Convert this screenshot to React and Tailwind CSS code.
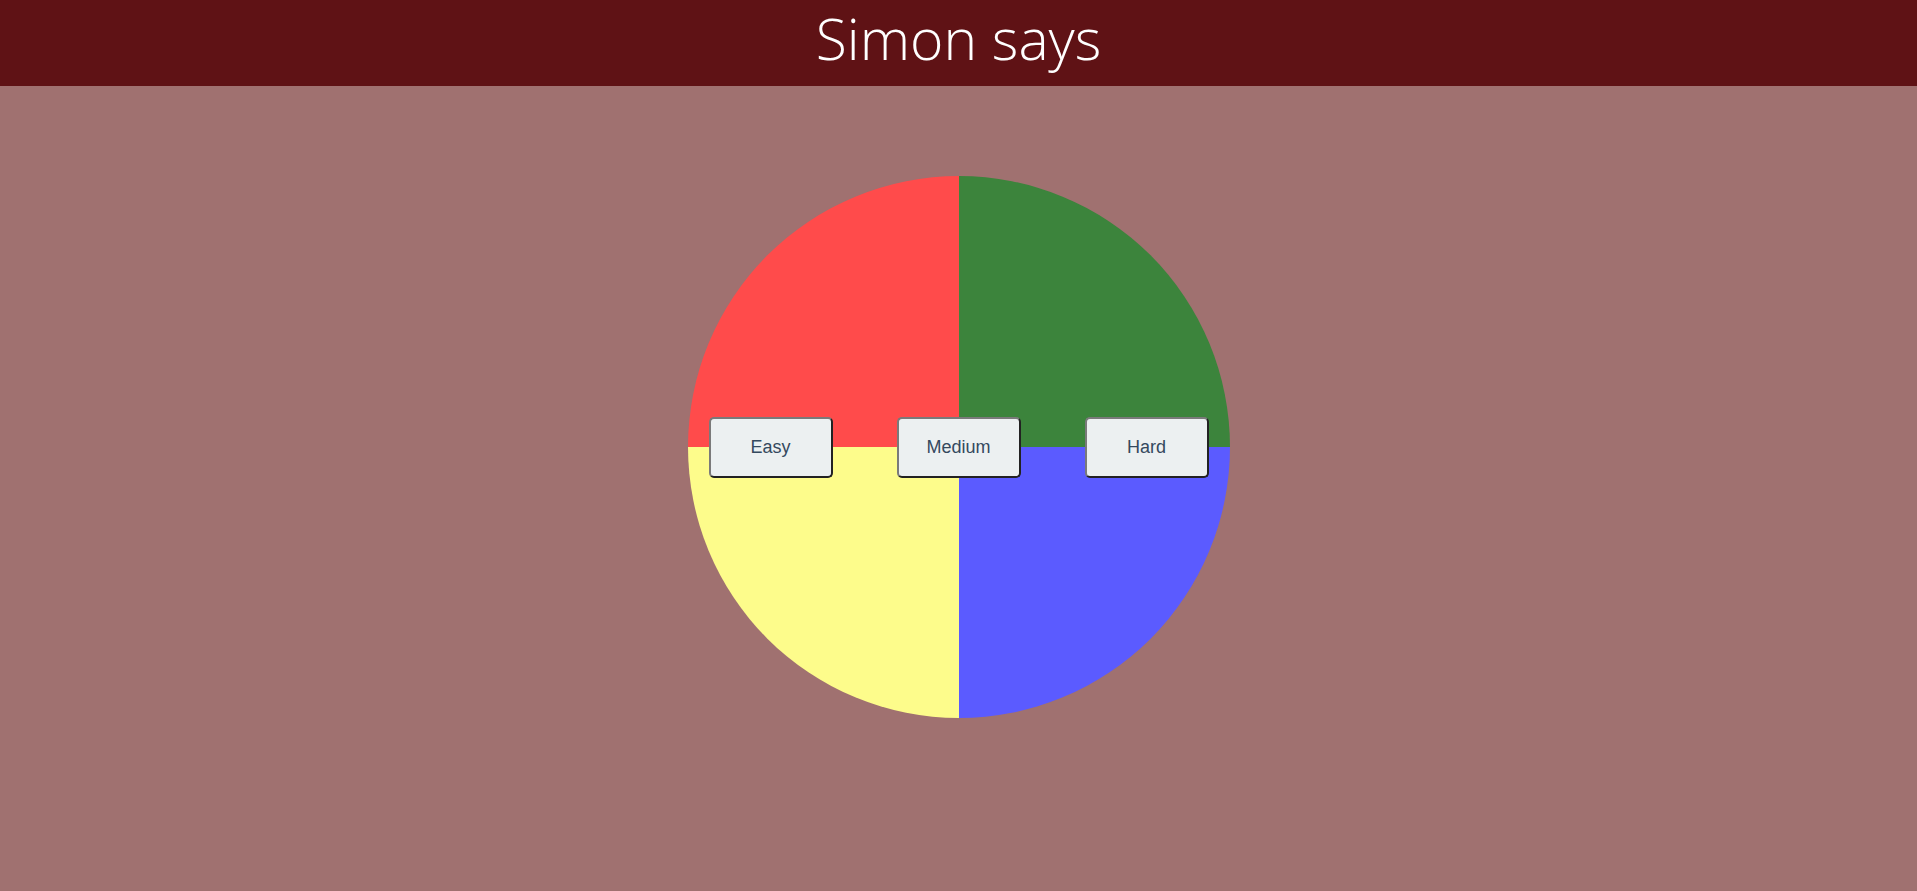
import React from 'react';

const levels = ['Easy', 'Medium', 'Hard'];

const App = () => {
    return (
        <div className="min-h-screen bg-[#a07170]">
            {/* Title bar */}
            <header className="h-[86px] bg-[#5f1215] flex justify-center pt-[5px]">
                <h1 className="text-white text-[57px] leading-[66px] font-light font-['Open_Sans',sans-serif]">
                    Simon says
                </h1>
            </header>

            {/* Board */}
            <main className="flex justify-center pt-[90px]">
                <div className="relative w-[542px] h-[542px]">
                    <div className="grid grid-cols-2 grid-rows-2 w-full h-full rounded-full overflow-hidden">
                        <div className="bg-[#ff4b4b]" />
                        <div className="bg-[#3c843c]" />
                        <div className="bg-[#fdfc8b]" />
                        <div className="bg-[#5b5bff]" />
                    </div>

                    <div className="absolute inset-0 flex items-center justify-between px-[21px]">
                        {levels.map((level) => (
                            <button
                                key={level}
                                className="w-[124px] h-[61px] bg-[#ecf0f1] rounded-[5px] border-2 border-t-[#7a7a7a] border-l-[#7a7a7a] border-r-[#222] border-b-[#222] text-[18px] text-[#34495e] font-['Liberation_Sans',Arial,sans-serif] cursor-pointer"
                            >
                                {level}
                            </button>
                        ))}
                    </div>
                </div>
            </main>
        </div>
    );
};

export default App;
